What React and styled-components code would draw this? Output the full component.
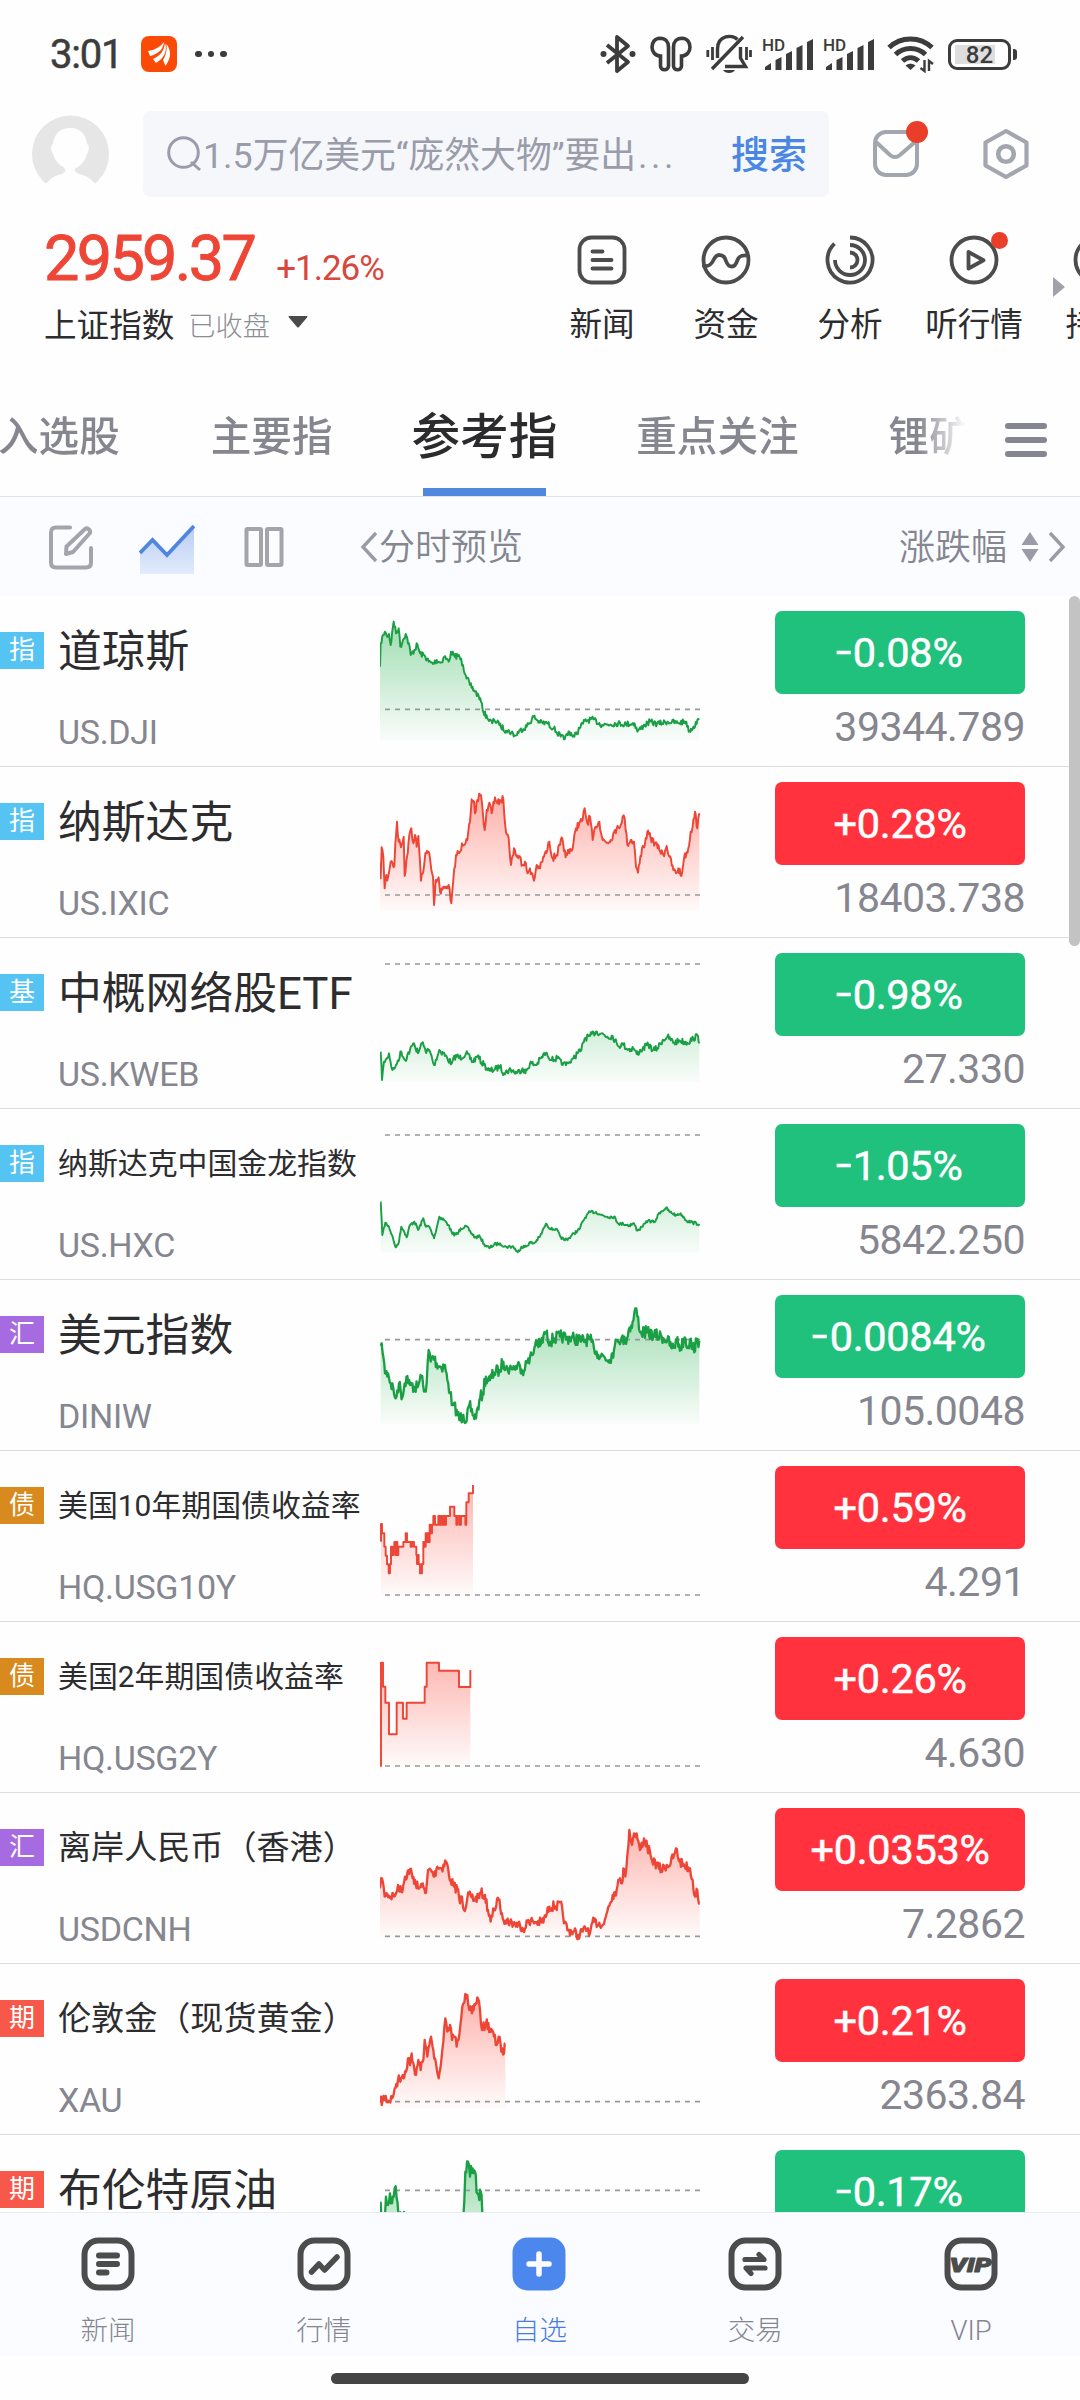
import React from 'react'
import styled, { createGlobalStyle } from 'styled-components'

const RED = '#ee4636'
const GREEN = '#1a9f45'

const TAG_COLORS = {
    指: '#55c4f3',
    基: '#55c4f3',
    汇: '#a66be0',
    债: '#d88a1e',
    期: '#f8584a',
}

// points are "x,y" pairs, three units to a pixel, y counted from `origin`
const STOCKS = [
    {
        tag: '指', name: '道琼斯', code: 'US.DJI', change: '-0.08%', price: '39344.789',
        chart: {
            origin: 708, base: 1048, noise: 11,
            points: '60,920 62,850 69,825 75,815 81,830 87,822 92,855 101,785 108,820 116,805 121,860 129,840 137,822 149,860 152,885 163,870 172,853 180,880 196,890 206,905 219,912 230,900 242,908 253,890 266,905 273,875 284,890 296,885 309,915 317,945 330,975 345,995 361,1015 368,1050 382,1075 397,1090 403,1080 418,1095 438,1112 454,1117 466,1127 480,1110 500,1100 521,1070 540,1088 561,1090 581,1105 602,1130 614,1138 628,1115 643,1130 659,1105 674,1082 700,1078 726,1095 767,1090 798,1092 824,1090 832,1115 850,1098 870,1085 891,1092 922,1085 953,1088 979,1085 986,1115 1000,1100 1017,1080',
        },
    },
    {
        tag: '指', name: '纳斯达克', code: 'US.IXIC', change: '+0.28%', price: '18403.738',
        chart: {
            origin: 21, base: 405, noise: 14,
            points: '60,310 62,355 65,262 70,290 74,385 79,345 82,362 92,305 103,320 106,250 111,185 116,245 125,255 131,230 134,348 141,290 150,215 154,205 160,250 165,225 170,260 175,228 183,362 190,335 196,280 208,280 214,330 219,350 222,435 227,360 236,352 240,395 250,380 258,385 266,375 274,430 280,360 288,285 300,275 306,250 322,240 330,185 335,118 342,125 345,160 352,120 360,104 366,130 374,210 380,150 388,128 395,160 405,112 412,130 420,120 430,118 436,200 446,235 453,315 462,265 470,290 480,290 487,315 495,305 503,340 510,325 522,362 530,315 540,325 552,290 562,270 568,245 578,295 590,285 600,255 607,235 617,292 626,270 638,265 648,205 660,185 668,180 674,145 682,190 690,170 698,240 707,200 718,185 728,240 742,248 752,240 765,210 778,205 788,170 794,175 802,255 812,240 822,245 828,320 834,338 846,265 855,250 862,215 872,235 885,250 898,270 910,285 920,258 928,290 940,330 948,340 955,325 964,348 972,295 985,265 992,215 998,200 1005,155 1012,205 1018,160',
        },
    },
    {
        tag: '基', name: '中概网络股ETF', code: 'US.KWEB', change: '-0.98%', price: '27.330',
        chart: {
            origin: 534, base: 612, noise: 12,
            points: '62,875 66,960 72,905 80,895 87,880 97,930 108,915 124,875 135,900 150,870 162,850 174,880 186,850 196,870 210,875 222,915 238,870 250,880 262,895 275,910 288,885 298,895 318,880 338,905 352,890 372,915 388,932 402,930 420,920 432,940 452,928 470,940 488,925 496,940 510,910 530,915 545,890 560,878 575,900 592,895 608,915 625,910 640,895 652,880 664,870 674,835 690,828 708,815 725,820 742,830 758,828 772,855 790,855 805,868 820,865 830,882 848,865 865,855 880,870 892,865 908,840 922,830 942,848 960,842 982,848 1000,835 1014,828 1018,850',
        },
    },
    {
        tag: '指', name: '纳斯达克中国金龙指数', code: 'US.HXC', change: '-1.05%', price: '5842.250',
        chart: {
            origin: 27, base: 105, noise: 6,
            points: '62,305 67,405 76,368 86,378 96,405 107,442 117,425 124,380 133,395 140,412 150,375 163,365 175,390 190,355 198,380 208,380 222,415 232,375 238,350 252,360 265,375 277,402 293,402 302,385 318,378 328,392 345,412 360,410 372,432 388,444 402,434 420,430 438,440 460,440 473,457 484,440 498,440 508,428 522,430 540,410 553,382 560,372 572,388 588,386 600,408 612,420 628,414 642,400 658,388 670,362 680,345 690,336 708,336 722,344 742,350 762,350 776,372 790,372 808,376 822,370 832,392 848,380 864,362 884,366 898,338 918,324 930,336 948,345 962,340 980,362 998,368 1018,372',
        },
    },
    {
        tag: '汇', name: '美元指数', code: 'DINIW', change: '-0.0084%', price: '105.0048',
        chart: {
            origin: 540, base: 719, noise: 24, thick: true,
            points: '62,738 68,760 75,820 84,820 92,850 100,865 107,895 117,850 127,892 134,850 142,828 150,855 162,860 172,862 184,830 192,875 200,850 206,750 212,785 220,770 230,790 242,800 255,795 262,840 270,880 278,915 290,930 298,960 310,945 320,962 328,915 338,945 348,955 358,900 368,880 378,830 390,840 402,818 418,810 430,785 442,805 456,808 468,798 480,798 492,812 505,775 518,765 528,722 540,738 556,700 570,725 582,715 600,710 620,712 642,715 665,722 690,718 702,745 715,765 730,768 748,780 762,750 772,720 785,712 796,730 806,690 818,665 826,625 832,650 842,695 860,698 882,705 905,710 922,720 936,745 950,725 962,745 974,712 984,740 990,718 998,748 1010,728 1018,722',
        },
    },
    {
        tag: '债', name: '美国10年期国债收益率', code: 'HQ.USG10Y', change: '+0.59%', price: '4.291',
        chart: {
            origin: 33, base: 465, noise: 0,
            points: '63,305 63,252 66,252 66,280 73,280 73,320 77,320 77,347 81,347 81,373 86,373 86,400 90,400 90,373 93,373 93,320 96,320 96,345 100,345 100,320 103,320 103,306 106,306 106,345 109,345 109,306 112,306 112,345 115,345 115,320 130,320 130,306 137,306 137,280 141,280 141,306 152,306 152,320 156,320 156,306 162,306 162,320 169,320 169,345 171,345 171,372 174,372 174,345 176,345 176,372 180,372 180,400 186,400 186,372 190,372 190,306 193,306 193,320 197,320 197,280 200,280 200,306 203,306 203,280 206,280 206,306 209,306 209,254 212,254 212,280 216,280 216,254 220,254 220,228 225,228 225,254 235,254 235,228 239,228 239,254 242,254 242,228 246,228 246,254 250,254 250,228 254,228 254,254 258,254 258,228 270,228 270,200 283,200 283,228 289,228 289,254 293,254 293,228 299,228 299,254 303,254 303,228 316,228 316,254 319,254 319,187 326,187 326,160 339,160 339,135',
        },
    },
    {
        tag: '债', name: '美国2年期国债收益率', code: 'HQ.USG2Y', change: '+0.26%', price: '4.630',
        chart: {
            origin: 546, base: 978, noise: 0,
            points: '63,980 63,668 69,668 69,740 76,740 76,788 87,788 87,883 110,883 110,788 129,788 129,836 140,836 140,788 194,788 194,740 200,740 200,668 237,668 237,692 297,692 297,741 331,741 331,690',
        },
    },
    {
        tag: '汇', name: '离岸人民币（香港）', code: 'USDCNH', change: '+0.0353%', price: '7.2862',
        chart: {
            origin: 39, base: 469, noise: 19, thick: true,
            points: '60,325 66,295 74,350 82,342 92,350 108,340 114,315 124,335 135,290 150,268 158,295 165,300 174,325 186,320 198,338 204,270 215,275 222,290 232,260 245,265 258,245 265,270 272,300 282,320 292,325 300,370 306,350 312,390 322,355 332,345 345,362 360,338 375,345 384,390 392,425 402,390 416,360 426,400 436,422 450,425 465,432 480,435 495,445 505,420 520,425 545,428 558,410 568,380 585,378 606,378 612,430 625,450 640,455 655,465 668,455 684,445 690,460 697,428 718,428 732,432 745,380 758,345 770,330 780,295 786,310 790,265 796,290 802,225 808,150 816,195 822,160 830,160 840,210 852,175 862,200 874,235 890,255 904,270 920,255 932,250 942,225 948,205 958,245 972,255 990,265 998,300 1005,350 1012,330 1019,370',
        },
    },
    {
        tag: '期', name: '伦敦金（现货黄金）', code: 'XAU', change: '+0.21%', price: '2363.84',
        chart: {
            origin: 552, base: 965, noise: 19, thick: true,
            points: '60,968 68,960 75,950 84,962 96,955 104,925 114,900 128,885 138,875 144,835 150,855 155,820 162,860 168,885 175,840 182,870 190,840 194,780 202,830 208,795 213,770 220,810 228,850 236,895 244,840 250,785 256,715 262,755 270,735 276,780 284,770 290,800 298,765 304,710 310,670 316,642 322,645 328,690 336,700 345,675 354,655 360,690 366,750 378,730 390,745 402,770 410,795 416,770 424,815 432,820 436,790',
        },
    },
    {
        tag: '期', name: '布伦特原油', code: 'OIL', change: '-0.17%', price: '85.12',
        chart: {
            origin: 1065, base: 1231, noise: 30, thick: true,
            points: '60,1320 62,1268 66,1300 74,1340 78,1250 84,1275 90,1240 96,1270 104,1225 110,1255 118,1300 124,1330 132,1296 140,1340 200,1350 300,1350 310,1310 316,1175 324,1145 330,1190 338,1165 345,1175 352,1240 358,1260 362,1235 367,1300 380,1350',
        },
    },
]

const TABS = ['入选股', '主要指', '参考指', '重点关注', '锂矿']

// long names shrink to stay clear of the chart column
const nameSize = name => {
    if (name.length > 9) return 29.9
    if (name.length > 8) return 33.1
    return 43.8
}

// linear interpolation between the points with a repeatable wobble on top
const buildLine = (points, noise) => {
    const pts = points.split(' ').map(p => p.split(',').map(Number))
    if (!noise) return pts

    const out = [pts[0]]
    let seed = 7
    for (let i = 1; i < pts.length; i++) {
        const [x0, y0] = pts[i - 1]
        const [x1, y1] = pts[i]
        const steps = Math.max(1, Math.round((x1 - x0) / 2.5))
        for (let s = 1; s <= steps; s++) {
            seed = (seed * 16807) % 2147483647
            const wobble = s === steps ? 0 : (seed / 2147483647 - 0.5) * noise * 1.6
            out.push([x0 + ((x1 - x0) * s) / steps, y0 + ((y1 - y0) * s) / steps + wobble])
        }
    }
    return out
}

const Sparkline = ({ id, color, chart }) => {
    const line = buildLine(chart.points, chart.noise)
    const path = line.map(([x, y]) => `${x.toFixed(1)},${(y - chart.origin).toFixed(1)}`).join(' ')
    const first = line[0][0]
    const last = line[line.length - 1][0]
    const base = chart.base - chart.origin

    return (
        <ChartSvg viewBox="60 0 966 513">
            <defs>
                <linearGradient id={id} gradientUnits="userSpaceOnUse" x1="0" y1="78" x2="0" y2="432">
                    <stop offset="0" stopColor={color === RED ? '#ff4a3c' : '#22b14c'} stopOpacity="0.44" />
                    <stop offset="1" stopColor={color === RED ? '#ff4a3c' : '#22b14c'} stopOpacity="0.02" />
                </linearGradient>
            </defs>
            <polygon points={`${first},432 ${path} ${last},432`} fill={`url(#${id})`} />
            <line x1="75" y1={base} x2="1021" y2={base} stroke="#999" strokeWidth="5" strokeDasharray="15 15" />
            <polyline points={path} fill="none" stroke={color} strokeWidth={chart.thick ? 7 : 5.8} strokeLinejoin="round" />
        </ChartSvg>
    )
}

const Signal = () => (
    <svg width="52" height="36" viewBox="0 0 52 36" fill="#3c3c3c">
        <text x="0" y="15" fontFamily="Roboto, sans-serif" fontSize="17" fontWeight="500">HD</text>
        <path d="M3 34v-3l6-4v7zM13.5 34v-10l6-3v13zM24 34v-16l6-3v19zM34.500 34v-22l6-3v25zM45 34v-28l6-3v31z" />
    </svg>
)

const StatusIcons = () => (
    <StatusRight>
        <svg width="36" height="40" viewBox="0 0 36 40" fill="none" stroke="#3c3c3c" strokeWidth="3.800" strokeLinejoin="round">
            <path d="M7 11l21 17-11 9V3l11 9L7 29" />
            <circle cx="3.500" cy="20" r="3" fill="#3c3c3c" stroke="none" />
            <circle cx="32.500" cy="20" r="3" fill="#3c3c3c" stroke="none" />
        </svg>
        <svg width="42" height="36" viewBox="0 0 42 36" fill="none" stroke="#3c3c3c" strokeWidth="3.600">
            <path d="M18.500 11v19c0 5-8 5-8 0V20C-.5 20-1 2.500 10 2.200c5.500 0 8.500 4 8.500 8.800z" />
            <path d="M23.500 11v19c0 5 8 5 8 0V20c11 0 11.500-17.500.5-17.800-5.500 0-8.500 4-8.500 8.800z" />
        </svg>
        <svg width="46" height="40" viewBox="0 0 46 40" fill="none" stroke="#3c3c3c" strokeWidth="3.400">
            <path d="M11.500 24V15c0-14 15-15 20-9.500M34.500 13v11l5 8.500H19M6 35L37 3" />
            <path d="M6.500 13v13M1.800 16v7M40.500 13v13M44.500 16v7" strokeWidth="2.800" />
            <path d="M17 36h12c-2 4-10 4-12 0z" fill="#3c3c3c" stroke="none" />
        </svg>
        <Signal />
        <Signal />
        <svg width="48" height="38" viewBox="0 0 48 38" fill="none" stroke="#3c3c3c" strokeWidth="5">
            <path d="M2 12.500C14 1 33 1 45 12.500M8.500 19.500c8.500-8 21.500-8 30 0M15.500 26c5-4.500 11-4.500 16 0" />
            <path d="M18.500 30.500c3-2.500 7-2.500 10 0l-5 4.500z" fill="#3c3c3c" stroke="none" />
            <path d="M37.500 25v11l-4-3M42 36V26l4 3" strokeWidth="2.400" />
        </svg>
        <Battery>
            <BatteryBody>82</BatteryBody>
            <BatteryNub />
        </Battery>
    </StatusRight>
)

const MenuIcon = ({ kind }) => (
    <svg width="50" height="50" viewBox="0 0 50 50" fill="none" stroke="#4c4c4c" strokeWidth="3.800" strokeLinecap="round" strokeLinejoin="round">
        {kind === 'news' && (
            <>
                <rect x="2.500" y="2.500" width="45" height="45" rx="12" />
                <path d="M15.500 16.500h10M15.500 25h19M15.500 33.500h19" />
            </>
        )}
        {kind === 'funds' && (
            <>
                <circle cx="25" cy="25" r="22.500" />
                <path d="M3 31c5 .5 7-1 9-5 1.500-3 2.500-6 6-6 5 0 6 3 7 6s2 5.500 6 5.500c3.500 0 4.500-3.500 5.500-6.500 1.500-4 4-5 10-4.500" />
            </>
        )}
        {kind === 'analysis' && (
            <>
                <path d="M25 2.500a22.500 22.500 0 1 1-15.500 6.200" strokeLinecap="butt" />
                <path d="M25 10a15 15 0 1 1-15 15" strokeLinecap="butt" />
                <path d="M25 17.500a7.500 7.500 0 0 1 0 15" strokeLinecap="butt" />
            </>
        )}
        {kind === 'listen' && (
            <>
                <circle cx="25" cy="25" r="22.500" />
                <path d="M19.500 17v16.500l15-8.250z" />
            </>
        )}
        {kind === 'hold' && <circle cx="25" cy="25" r="22.500" />}
    </svg>
)

const NavIcon = ({ kind }) => (
    <svg width="54" height="54" viewBox="0 0 54 54" fill="none" stroke="#4c4c4c" strokeWidth="6" strokeLinecap="round" strokeLinejoin="round">
        {kind === 'add' ? (
            <>
                <rect x="0.500" y="0.500" width="53" height="53" rx="15" fill="#4c87ee" stroke="none" />
                <path d="M27 17v20M17 27h20" stroke="#fff" strokeWidth="5.500" />
            </>
        ) : (
            <rect x="3.500" y="3.500" width="47" height="47" rx="14" strokeWidth="6" />
        )}
        {kind === 'news' && <path d="M18 18.500h18M18 27h18M18 35.500h7.500" />}
        {kind === 'quote' && <path d="M14.500 35l7.500-8 5.500 6L40 20" strokeWidth="5.500" />}
        {kind === 'trade' && <path d="M17 22.500h19l-5-5M37 31H18l5 5.500" strokeWidth="5.200" />}
        {kind === 'vip' && (
            <text x="26.500" y="35" textAnchor="middle" fontFamily="Roboto, sans-serif" fontSize="20" fontWeight="900" fontStyle="italic" fill="#4c4c4c" stroke="#4c4c4c" strokeWidth="1" textLength="42" lengthAdjust="spacingAndGlyphs">VIP</text>
        )}
    </svg>
)

const MENU = [
    { kind: 'news', label: '新闻' },
    { kind: 'funds', label: '资金' },
    { kind: 'analysis', label: '分析' },
    { kind: 'listen', label: '听行情', dot: true },
    { kind: 'hold', label: '持仓' },
]

const NAV = [
    { kind: 'news', label: '新闻' },
    { kind: 'quote', label: '行情' },
    { kind: 'add', label: '自选', active: true },
    { kind: 'trade', label: '交易' },
    { kind: 'vip', label: 'VIP' },
]

const StockRow = ({ stock, index }) => {
    const up = stock.change.startsWith('+')

    return (
        <Row>
            <Info>
                <NameLine>
                    <Tag color={TAG_COLORS[stock.tag]}>{stock.tag}</Tag>
                    <Name $size={nameSize(stock.name)}>{stock.name}</Name>
                </NameLine>
                <Code>{stock.code}</Code>
            </Info>
            <Sparkline id={`fill${index}`} color={up ? RED : GREEN} chart={stock.chart} />
            <Quote>
                <Pill $up={up}>
                    <Sign $up={up}>{stock.change[0]}</Sign>
                    {stock.change.slice(1)}
                </Pill>
                <Price>{stock.price}</Price>
            </Quote>
        </Row>
    )
}

const App = () => (
    <Screen>
        <GlobalStyle />

        <StatusBar>
            <Time>3:01</Time>
            <svg width="36" height="36" viewBox="0 0 36 36">
                <rect width="36" height="36" rx="8" fill="#fb4a05" />
                <path d="M7 15c7-1 12-4 16-9-1 8-6 12-14 14zM12 23c7-3 11-8 12-16 3 9-2 16-9 20zM22 24c3-5 4-9 3.500-16 5 7 5 13-1 22z" fill="#fff" />
            </svg>
            <Dots><i /><i /><i /></Dots>
            <StatusIcons />
        </StatusBar>

        <Header>
            <svg width="78" height="78" viewBox="0 0 78 78">
                <circle cx="38.500" cy="39" r="38.500" fill="#e6e6e6" />
                <path d="M38 13c10 0 16 6 17 16 2 1 3 5 0 10-2 7-5 10-9 13-6 3-3 6 5 8 6 2 10 6 13 10v10H13V70c3-4 7-8 13-10 8-2 9-5 5-8-5-3-8-7-10-13-3-5-2-9 0-10 1-10 7-16 17-16z" fill="#fefefe" />
            </svg>
            <SearchBox>
                <svg width="36" height="36" viewBox="0 0 36 36" fill="none" stroke="#9a9caa" strokeWidth="3">
                    <circle cx="16.500" cy="16.500" r="14.800" />
                    <path d="M24 26l9 8" />
                </svg>
                <SearchHint>1.5万亿美元“庞然大物”要出<Ellipsis>...</Ellipsis></SearchHint>
                <SearchButton>搜索</SearchButton>
            </SearchBox>
            <HeaderIcon>
                <svg width="46" height="48" viewBox="0 0 46 48" fill="none" stroke="#a3a5af" strokeWidth="4">
                    <rect x="2" y="2" width="42" height="43" rx="11" />
                    <path d="M3 12l14 13q5 4 10 0l15-13" />
                </svg>
                <RedDot $size={22} $top={-9} $right={-9} />
            </HeaderIcon>
            <svg width="46" height="52" viewBox="0 0 46 52" fill="none" stroke="#a3a5af" strokeWidth="4.200" strokeLinejoin="round">
                <path d="M23 3L43.500 14.500v23L23 49 2.500 37.500v-23z" />
                <circle cx="23" cy="26" r="7.800" strokeWidth="4.600" />
            </svg>
        </Header>

        <Summary>
            <IndexBlock>
                <IndexValues>
                    <IndexValue>2959.37</IndexValue>
                    <IndexChange>+1.26%</IndexChange>
                </IndexValues>
                <IndexMeta>
                    <IndexName>上证指数</IndexName>
                    <IndexState>已收盘</IndexState>
                    <svg width="20" height="12" viewBox="0 0 20 12"><path d="M1 0h18q1 0 0 1.500l-8 9.500q-1 1-2 0l-8-9.500q-1-1.500 0-1.500z" fill="#4a4a4a" /></svg>
                </IndexMeta>
            </IndexBlock>
            <Menu>
                {MENU.map(item => (
                    <MenuItem key={item.label}>
                        <MenuIcon kind={item.kind} />
                        {item.label}
                        {item.dot && <RedDot $size={17} $top={-3} $right={28} />}
                    </MenuItem>
                ))}
                <MenuArrow viewBox="0 0 12 20"><path d="M0 0l12 10L0 20z" fill="#a0a1ac" /></MenuArrow>
            </Menu>
        </Summary>

        <TabBar>
            <TabStrip>
                {TABS.map(tab => (
                    <Tab key={tab} $active={tab === '参考指'}>{tab}</Tab>
                ))}
            </TabStrip>
            <Burger><i /><i /><i /></Burger>
        </TabBar>

        <Toolbar>
            <svg width="44" height="46" viewBox="0 0 44 46" fill="none" stroke="#a3a4ac" strokeWidth="4" strokeLinecap="round" strokeLinejoin="round">
                <path d="M21 3.500H7q-5 0-5 5v30q0 5 5 5h30q5 0 5-5V24" />
                <path d="M17 30l.5-7.500L36 5q2-1.500 4 .5t.5 4L24 28z" />
            </svg>
            <svg width="56" height="52" viewBox="0 0 56 52">
                <defs>
                    <linearGradient id="mode" x1="0" y1="0" x2="0" y2="1">
                        <stop offset="0" stopColor="#b9cdf5" />
                        <stop offset="1" stopColor="#e3ebfb" />
                    </linearGradient>
                </defs>
                <path d="M1 30l12.500-13L28 32 55 4v47H1z" fill="url(#mode)" />
                <path d="M1 30l12.500-13L28 32 55 3" fill="none" stroke="#4f86e0" strokeWidth="3.800" />
            </svg>
            <svg width="40" height="42" viewBox="0 0 40 42" fill="none" stroke="#a3a4ac" strokeWidth="4">
                <rect x="2.500" y="3" width="14.500" height="36" rx="1" />
                <rect x="23" y="3" width="14.500" height="36" rx="1" />
            </svg>
            <Preview>
                <Chevron viewBox="0 0 18 32"><path d="M16 2L3 16l13 14" /></Chevron>
                <ToolLabel>分时预览</ToolLabel>
            </Preview>
            <Sort>
                <ToolLabel>涨跌幅</ToolLabel>
                <svg width="18" height="32" viewBox="0 0 18 32" fill="#9a9ba6"><path d="M9 1l8.500 13H.5zM9 31l8.500-13H.5z" /></svg>
                <Chevron viewBox="0 0 18 32"><path d="M2 2l13 14L2 30" /></Chevron>
            </Sort>
        </Toolbar>

        <List>
            {STOCKS.map((stock, index) => (
                <StockRow key={stock.code} stock={stock} index={index} />
            ))}
            <ScrollThumb />
        </List>

        <Nav>
            {NAV.map(item => (
                <NavItem key={item.kind} $active={item.active}>
                    <NavIcon kind={item.kind} />
                    {item.label}
                </NavItem>
            ))}
        </Nav>

        <HomeArea>
            <HomeBar />
        </HomeArea>
    </Screen>
)

const GlobalStyle = createGlobalStyle`
    body {
        margin: 0;
        background-color: #fefefe;
    }

    svg {
        display: block;
        flex-shrink: 0;
    }
`

const Screen = styled.div`
    display: flex;
    flex-direction: column;
    width: 1080px;
    height: 2400px;
    overflow: hidden;
    background-color: #fefefe;
    color: #2d2d2f;
    font-family: Roboto, 'Noto Sans CJK SC', sans-serif;
    white-space: nowrap;
`

const StatusBar = styled.div`
    box-sizing: border-box;
    display: flex;
    align-items: center;
    height: 108px;
    padding: 0 63px 0 50px;
`

const Time = styled.div`
    width: 91px;
    font-size: 40px;
    letter-spacing: -1.200px;
    color: #3c3c3c;
    -webkit-text-stroke: 0.500px #3c3c3c;
`

const Dots = styled.div`
    display: flex;
    gap: 6px;
    margin-left: 18px;

    i {
        width: 6.500px;
        height: 6.500px;
        border-radius: 50%;
        background-color: #3c3c3c;
    }
`

const StatusRight = styled.div`
    display: flex;
    align-items: center;
    margin-left: auto;

    svg:nth-child(2) { margin-left: 14px; }
    svg:nth-child(3) { margin-left: 14px; }
    svg:nth-child(4) { margin-left: 10px; }
    svg:nth-child(5) { margin-left: 9px; }
    svg:nth-child(6) { margin-left: 12px; }
`

const Battery = styled.div`
    display: flex;
    align-items: center;
    gap: 2px;
    margin-left: 13px;
`

const BatteryBody = styled.div`
    box-sizing: border-box;
    width: 63px;
    height: 31px;
    border: 3px solid #3c3c3c;
    border-radius: 9px;
    background: linear-gradient(#dedede, #dedede) 4px 3px / 40px 19px no-repeat;
    font-size: 24px;
    font-weight: 500;
    line-height: 26px;
    text-align: center;
    color: #3c3c3c;
`

const BatteryNub = styled.div`
    width: 4px;
    height: 11px;
    border-radius: 0 3px 3px 0;
    background-color: #3c3c3c;
`

const Header = styled.div`
    display: flex;
    align-items: center;
    height: 92px;
    padding-left: 32px;
`

const SearchBox = styled.div`
    box-sizing: border-box;
    display: flex;
    align-items: center;
    width: 686px;
    height: 86px;
    margin: 0 44px 0 33px;
    padding: 0 22px 0 24px;
    border-radius: 8px;
    background-color: #f5f7fb;
`

const SearchHint = styled.span`
    flex: 1;
    padding-bottom: 4px;
    font-size: 35.800px;
    color: #9a9caa;
`

const Ellipsis = styled.span`
    margin-left: 2px;
    letter-spacing: 3.500px;
`

const SearchButton = styled.span`
    padding-bottom: 6px;
    font-size: 38px;
    font-weight: 500;
    color: #4a86e4;
`

const HeaderIcon = styled.div`
    position: relative;
    margin-right: 64px;
`

const RedDot = styled.span`
    position: absolute;
    top: ${props => props.$top}px;
    right: ${props => props.$right}px;
    width: ${props => props.$size}px;
    height: ${props => props.$size}px;
    border-radius: 50%;
    background-color: #ea3d2a;
`

const Summary = styled.div`
    display: flex;
    height: 175px;
`

const IndexBlock = styled.div`
    box-sizing: border-box;
    width: 540px;
    padding: 21px 0 0 44px;
`

const IndexValues = styled.div`
    display: flex;
    align-items: baseline;
    height: 79px;
    line-height: 76px;
    color: #ee4636;
`

const IndexValue = styled.span`
    font-size: 63px;
    letter-spacing: -2.700px;
    -webkit-text-stroke: 0.900px #ee4636;
`

const IndexChange = styled.span`
    margin-left: 22px;
    font-size: 35px;
    letter-spacing: -1px;
    color: #d9473c;
`

const IndexMeta = styled.div`
    display: flex;
    align-items: center;
    height: 44px;
`

const IndexName = styled.span`
    font-size: 32.600px;
`

const IndexState = styled.span`
    margin: 3px 18px 0 14px;
    font-size: 27.200px;
    font-weight: 300;
    color: #8c8d93;
`

const Menu = styled.div`
    position: relative;
    display: grid;
    grid-template-columns: repeat(5, 124px);
    width: 540px;
    padding-top: 35px;
    overflow: hidden;
`

const MenuItem = styled.div`
    position: relative;
    display: flex;
    flex-direction: column;
    align-items: center;
    gap: 18px;
    height: 112px;
    font-size: 32.600px;
    line-height: 44px;
`

const MenuArrow = styled.svg`
    position: absolute;
    top: 77px;
    right: 15px;
    width: 12px;
    height: 20px;
`

const TabBar = styled.div`
    box-sizing: border-box;
    display: flex;
    align-items: center;
    height: 122px;
    border-bottom: 1px solid #dfe2e8;
`

const TabStrip = styled.div`
    display: flex;
    width: 968px;
    height: 121px;
    overflow: hidden;
    mask-image: linear-gradient(to right, #000 918px, transparent 966px);
`

const Tab = styled.div`
    box-sizing: border-box;
    flex-shrink: 0;
    height: 121px;
    margin: ${props => (props.$active ? '0 -11px' : '0')};
    padding: 0 45px;
    font-size: ${props => (props.$active ? 48.6 : 40.6)}px;
    font-weight: 500;
    line-height: 125px;
    color: ${props => (props.$active ? '#2b2b2d' : '#85868f')};
    background: ${props => (props.$active ? 'linear-gradient(#5088e0, #5088e0) center bottom / 123px 8px no-repeat' : 'none')};

    &:first-child {
        margin: 0 1px 0 -47px;
    }
`

const Burger = styled.div`
    display: flex;
    flex-direction: column;
    gap: 8px;
    width: 42px;
    margin-left: 37px;
    padding-top: 9px;

    i {
        height: 6px;
        border-radius: 3px;
        background-color: #85868f;
    }
`

const Toolbar = styled.div`
    box-sizing: border-box;
    display: flex;
    align-items: center;
    height: 99px;
    padding: 0 14px 0 49px;
    background-color: #fafcff;
    font-size: 36px;
    color: #85868f;

    > svg:nth-child(2) { margin: 4px 0 0 46px; }
    > svg:nth-child(3) { margin-left: 49px; }
`

const ToolLabel = styled.span`
    padding-bottom: 5px;
    font-weight: 350;
`

const Preview = styled.div`
    display: flex;
    align-items: center;
    gap: 1px;
    margin-left: 76px;
`

const Sort = styled.div`
    display: flex;
    align-items: center;
    margin-left: auto;

    > svg { margin-left: 14px; }
    > svg:last-child { margin-left: 9px; }
`

const Chevron = styled.svg`
    width: 18px;
    height: 32px;
    fill: none;
    stroke: #9a9ba6;
    stroke-width: 3.400;
`

const List = styled.div`
    position: relative;
    height: 1616px;
    overflow: hidden;
`

const Row = styled.div`
    box-sizing: border-box;
    display: flex;
    height: 171px;
    border-bottom: 1px solid #dcdddf;
`

const Info = styled.div`
    width: 380px;
`

const NameLine = styled.div`
    display: flex;
    align-items: center;
    gap: 14px;
    height: 108px;
`

const Tag = styled.span`
    box-sizing: border-box;
    width: 44px;
    height: 37px;
    padding-left: 9px;
    background-color: ${props => props.color};
    font-size: 26px;
    line-height: 36px;
    color: #fff;
`

const Name = styled.span`
    padding-bottom: 4px;
    font-size: ${props => props.$size}px;
`

const Code = styled.div`
    padding-left: 58px;
    font-size: 34px;
    line-height: 56px;
    letter-spacing: -0.300px;
    color: #85868f;
`

const ChartSvg = styled.svg`
    width: 322px;
    height: 171px;
`

const Quote = styled.div`
    display: flex;
    flex-direction: column;
    align-items: flex-end;
    width: 323px;
    padding-top: 15px;
`

const Pill = styled.div`
    width: 250px;
    height: 83px;
    border-radius: 7px;
    background-color: ${props => (props.$up ? '#ff323d' : '#1fc17d')};
    font-size: 41.500px;
    line-height: 84px;
    letter-spacing: -0.300px;
    text-align: center;
    color: #fff;
    -webkit-text-stroke: 0.500px #fff;
`

const Sign = styled.span`
    display: inline-block;
    transform: ${props => (props.$up ? 'none' : 'translateY(-2px) scaleX(1.35)')};
    margin-right: ${props => (props.$up ? 0 : 4)}px;
`

const Price = styled.div`
    font-size: 41px;
    line-height: 66px;
    letter-spacing: -0.500px;
    color: #85868f;
`

const ScrollThumb = styled.div`
    position: absolute;
    top: 0;
    right: 0;
    width: 11px;
    height: 350px;
    border-radius: 6px;
    background-color: #c3c3c3;
`

const Nav = styled.div`
    box-sizing: border-box;
    display: grid;
    grid-template-columns: repeat(5, 1fr);
    height: 144px;
    padding: 24px 1px 0 0;
    border-top: 1px solid #e9ebf0;
    background-color: #fafcff;
`

const NavItem = styled.div`
    display: flex;
    flex-direction: column;
    align-items: center;
    gap: 20px;
    font-size: 27.500px;
    font-weight: 300;
    line-height: 40px;
    color: ${props => (props.$active ? '#4a7de0' : '#85868f')};
`

const HomeArea = styled.div`
    display: flex;
    justify-content: center;
    padding-top: 17px;
`

const HomeBar = styled.div`
    width: 418px;
    height: 11px;
    border-radius: 6px;
    background-color: #444;
`

export default App
